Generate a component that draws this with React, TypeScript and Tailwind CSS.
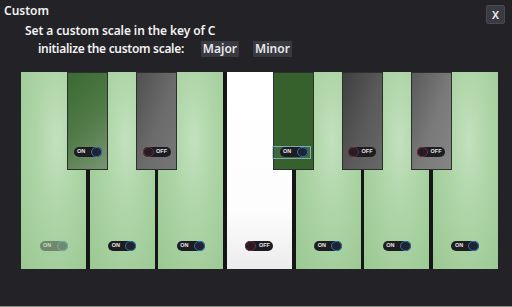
import React from "react";

type ToggleProps = { on: boolean; disabled?: boolean; focused?: boolean };

function Toggle({ on, disabled, focused }: ToggleProps) {
  return (
    <div className={"relative " + (disabled ? "opacity-40" : "")}>
      {focused && (
        <div className="absolute -left-[8px] -right-[3px] -top-[1.5px] -bottom-[1.5px] border border-[#9cc3e6]/70 bg-[#9cc3e6]/10" />
      )}
      <div className="relative flex h-[10px] w-[28px] items-center rounded-full bg-[#1d1d21] font-['Liberation_Sans',sans-serif] text-[5.5px] font-bold leading-none text-[#e6e6e6]">
        {on ? (
          <>
            <span className="ml-[3.5px] flex-1">ON</span>
            <span className="h-[10px] w-[11px] rounded-full border border-[#2f6fb8] bg-[#1f2430]" />
          </>
        ) : (
          <>
            <span className="h-[10px] w-[11px] rounded-full border border-[#7d2744] bg-[#241d22]" />
            <span className="ml-[2.5px] flex-1">OFF</span>
          </>
        )}
      </div>
    </div>
  );
}

const whiteKeys = [
  { on: true, disabled: true },
  { on: true },
  { on: true },
  { on: false },
  { on: true },
  { on: true },
  { on: true },
];

const blackKeys = [
  { left: "left-[46px]", on: true, bg: "bg-[linear-gradient(135deg,#3a6a31_0%,#507a47_50%,#789572_100%)]" },
  { left: "left-[115px]", on: false, bg: "bg-[linear-gradient(110deg,#505050_0%,#6c6c6c_55%,#767676_100%)]" },
  { left: "left-[252px]", on: true, focused: true, bg: "bg-[#36612c]" },
  { left: "left-[320.5px]", on: false, bg: "bg-[linear-gradient(110deg,#3f3f3f_0%,#5a5a5a_55%,#686868_100%)]" },
  { left: "left-[389.5px]", on: false, bg: "bg-[linear-gradient(110deg,#5a5a5a_0%,#7a7a7a_55%,#858585_100%)]" },
];

export default function App() {
  return (
    <div className="flex h-[307px] w-[512px] flex-col overflow-hidden border-b border-[#8c8c8c] bg-[#232327] font-['Noto_Sans',sans-serif] text-[#f2f2f2]">
      <div className="flex h-[22px] items-start justify-between pl-[4px] pr-[7px] pt-[3px]">
        <span className="text-[12px] font-semibold leading-[16px]">Custom</span>
        <button className="mt-[2px] flex h-[19px] w-[19px] items-center justify-center rounded-[2px] border border-[#4a4a52] bg-[#3a3a42] text-[11px] font-semibold leading-none text-[#f0f0f0]">
          X
        </button>
      </div>
      <div className="mt-[1px] pl-[25px] text-[12px] font-semibold leading-[16px] tracking-[-0.1px]">
        Set a custom scale in the key of C
      </div>
      <div className="mt-[2px] flex h-[16px] items-center pl-[38px] text-[12px] font-semibold leading-[16px] tracking-[-0.3px]">
        <span>initialize the custom scale:</span>
        <button className="ml-[17px] flex h-[16px] w-[38px] items-center justify-center bg-[#393940] text-[12px] font-semibold leading-none tracking-normal text-[#e8e8ec]">
          Major
        </button>
        <button className="ml-[14px] flex h-[16px] w-[39px] items-center justify-center bg-[#393940] text-[12px] font-semibold leading-none tracking-normal text-[#e8e8ec]">
          Minor
        </button>
      </div>
      <div className="relative ml-[21px] mt-[15px] flex h-[197px] w-[477px] gap-[3.5px] bg-[#161618]">
        {whiteKeys.map((k, i) => (
          <div
            key={i}
            className={
              "flex flex-1 flex-col items-center justify-end pb-[18px] " +
              (k.on
                ? "bg-[radial-gradient(ellipse_at_55%_35%,#c2e1be_0%,#aed5a7_40%,#9ac892_100%)]"
                : "bg-[linear-gradient(180deg,#ffffff_0%,#fdfdfd_70%,#ececec_100%)]")
            }
          >
            <Toggle on={k.on} disabled={k.disabled} />
          </div>
        ))}
        {blackKeys.map((b, i) => (
          <div
            key={i}
            className={
              "absolute top-0 flex h-[98px] w-[41px] flex-col items-center justify-end border border-[#2e2e2e] pb-[12px] " +
              b.left +
              " " +
              b.bg
            }
          >
            <Toggle on={b.on} focused={b.focused} />
          </div>
        ))}
      </div>
    </div>
  );
}
